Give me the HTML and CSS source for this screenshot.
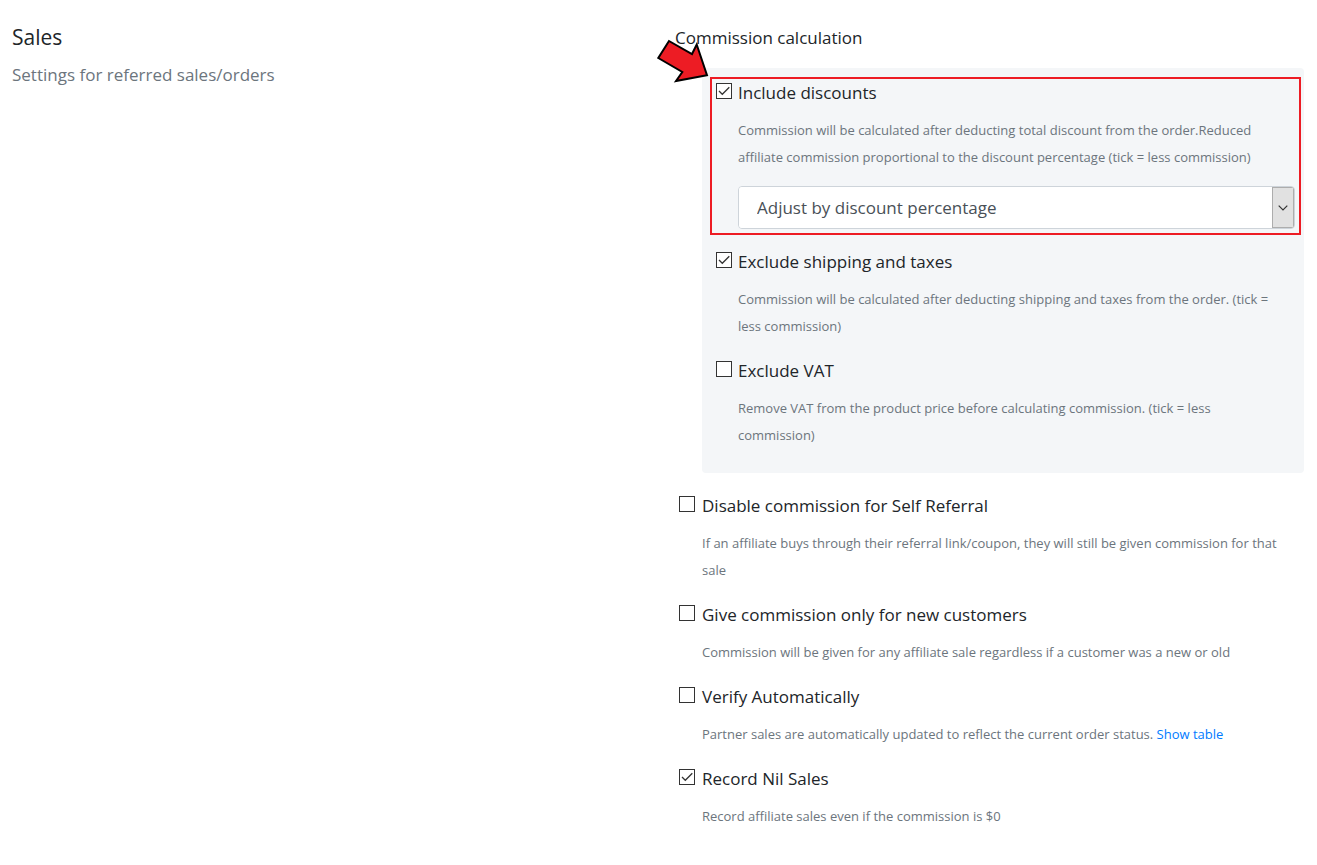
FILE: index.html
```html
<!DOCTYPE html>
<html lang="en">
<head>
<meta charset="utf-8">
<meta name="viewport" content="width=device-width, initial-scale=1">
<title>Sales settings</title>
<link rel="stylesheet" href="styles.css">
</head>
<body>
<main class="settings">
  <header class="intro">
    <h1 class="title">Sales</h1>
    <p class="subtitle">Settings for referred sales/orders</p>
  </header>
  <section class="options">
    <h2 class="heading">Commission calculation</h2>
    <div class="panel">
      <div class="item marked">
        <input class="check" type="checkbox" id="discounts" checked>
        <label class="label" for="discounts">Include discounts</label>
        <p class="help">Commission will be calculated after deducting total discount from the order.Reduced affiliate commission proportional to the discount percentage (tick = less commission)</p>
        <div class="picker">
          <select class="select" aria-label="Discount adjustment">
            <option>Adjust by discount percentage</option>
          </select>
          <span class="picker-button"><svg width="10" height="6" viewBox="0 0 10 6"><path d="M.7.7 5 5 9.3.7" fill="none" stroke="#333" stroke-width="1.2"/></svg></span>
        </div>
        <svg class="arrow" width="54" height="46" viewBox="0 0 54 46"><path d="M13 4 36 17 40.700 7.500 51 38.300 20 44 26.300 35 2.300 21Z" fill="#ed1c24" stroke="#000" stroke-width="2"/></svg>
      </div>
      <div class="item">
        <input class="check" type="checkbox" id="shipping" checked>
        <label class="label" for="shipping">Exclude shipping and taxes</label>
        <p class="help">Commission will be calculated after deducting shipping and taxes from the order. (tick = less commission)</p>
      </div>
      <div class="item">
        <input class="check" type="checkbox" id="vat">
        <label class="label" for="vat">Exclude VAT</label>
        <p class="help">Remove VAT from the product price before calculating commission. (tick = less commission)</p>
      </div>
    </div>
    <div class="list">
      <div class="item">
        <input class="check" type="checkbox" id="self">
        <label class="label" for="self">Disable commission for Self Referral</label>
        <p class="help">If an affiliate buys through their referral link/coupon, they will still be given commission for that sale</p>
      </div>
      <div class="item">
        <input class="check" type="checkbox" id="new">
        <label class="label" for="new">Give commission only for new customers</label>
        <p class="help">Commission will be given for any affiliate sale regardless if a customer was a new or old</p>
      </div>
      <div class="item">
        <input class="check" type="checkbox" id="verify">
        <label class="label" for="verify">Verify Automatically</label>
        <p class="help">Partner sales are automatically updated to reflect the current order status. <a class="link" href="#">Show table</a></p>
      </div>
      <div class="item">
        <input class="check" type="checkbox" id="nil" checked>
        <label class="label" for="nil">Record Nil Sales</label>
        <p class="help">Record affiliate sales even if the commission is $0</p>
      </div>
    </div>
  </section>
</main>
</body>
</html>
```
FILE: styles.css
```css
* { box-sizing: border-box; }
body {
  margin: 0;
  background: #fff;
  color: #212529;
  font: 17px/27px "Open Sans", "Noto Sans", sans-serif;
}
.settings {
  display: grid;
  grid-template-columns: 1fr 1fr;
  gap: 34px;
  padding: 24px 13px 24px 12px;
}
.title, .subtitle, .heading, .help { margin: 0; font-weight: 400; }
.title { font-size: 21px; line-height: 27px; }
.subtitle { margin-top: 10px; color: #6c757d; }
.heading { font-size: 17px; }
.panel {
  display: grid;
  gap: 17px;
  margin: 17px 0 19px 27px;
  padding: 11px 9px 24px 14px;
  border-radius: 4px;
  background: #f4f6f8;
}
.list { display: grid; gap: 17px; padding-left: 4px; }
.item {
  position: relative;
  display: grid;
  grid-template-columns: 16px 1fr;
  column-gap: 6px;
}
.list .item { column-gap: 7px; }
.check {
  appearance: none;
  width: 16px;
  height: 16px;
  margin: 4px 0 0;
  border: 1px solid #333;
  background: #fff;
}
.check:checked {
  background: #fff url("data:image/svg+xml,%3Csvg xmlns='http://www.w3.org/2000/svg' viewBox='0 0 14 14'%3E%3Cpath d='M2 7l3.300 3.300L12.300 3.300' fill='none' stroke='%23333' stroke-width='1.300'/%3E%3C/svg%3E") center / 14px 14px no-repeat;
}
.help {
  grid-column: 2;
  margin-top: 11px;
  padding-right: 12px;
  color: #6c757d;
  font-size: 13px;
}
.link { color: #007bff; text-decoration: none; }
.picker {
  grid-column: 2;
  display: grid;
  grid-template-columns: 1fr 22px;
  height: 43px;
  margin: 15px 0 2px;
  border: 1px solid #ced4da;
  border-radius: 4px;
  overflow: hidden;
}
.select {
  grid-area: 1 / 1 / 2 / 3;
  appearance: none;
  width: 100%;
  padding: 0 40px 0 18px;
  border: 0;
  background: #fff;
  color: #495057;
  font: inherit;
}
.picker-button {
  grid-area: 1 / 2;
  display: grid;
  place-items: center;
  z-index: 1;
  border: 1px solid #adadad;
  background: #e1e1e1;
  pointer-events: none;
}
.marked::after {
  content: "";
  position: absolute;
  inset: -2px -6px -4px;
  border: 2px solid #ed1c24;
  pointer-events: none;
}
.arrow { position: absolute; left: -60px; top: -42px; }
```
